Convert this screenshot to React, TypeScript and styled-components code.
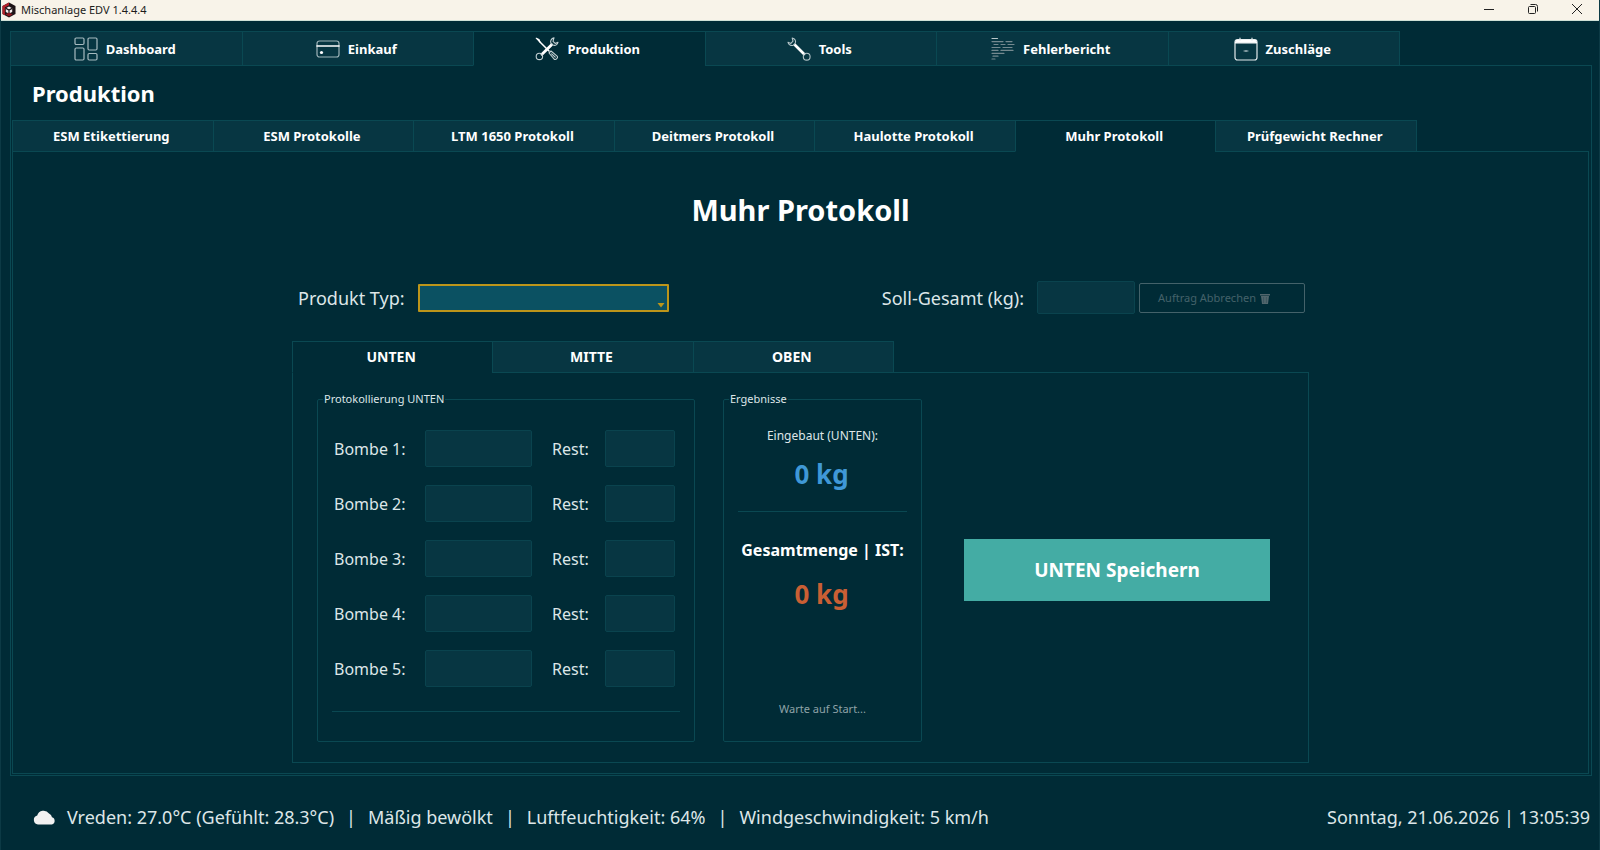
import React, { useState } from "react";
import styled, { createGlobalStyle, ThemeProvider } from "styled-components";

const theme = {
  bg: "#002b36",
  field: "#073642",
  line: "#0a4852",
  text: "#ffffff",
  soft: "#dde6e8",
  muted: "#8fa3a8",
  disabled: "#44626a",
  gold: "#bc951a",
  focusFill: "#0b5162",
  teal: "#44aca4",
  blue: "#3f98d7",
  orange: "#c95f34",
};

const GlobalStyle = createGlobalStyle`
  *, *::before, *::after { box-sizing: border-box; }
  body {
    margin: 0;
    background: ${theme.bg};
    color: ${theme.text};
    font-family: "Noto Sans", "Open Sans", sans-serif;
    font-size: 13px;
  }
  button, input, select { font-family: inherit; }
`;

const Window = styled.div`
  display: flex;
  flex-direction: column;
  min-height: 100vh;
  border: 1px solid #0c3a45;
  border-width: 0 1px;
`;

const TitleBar = styled.header`
  display: flex;
  align-items: center;
  height: 21px;
  padding-left: 1px;
  background: #f8f3e9;
  border-bottom: 1px solid #cfe0d6;
  color: #1c1c1c;
`;

const TitleText = styled.span`
  flex: 1;
  margin-left: 5px;
  font-size: 11px;
  line-height: 18px;
`;

const WindowButton = styled.button`
  display: flex;
  align-items: center;
  justify-content: center;
  width: 44px;
  height: 20px;
  padding: 0 0 2px;
  border: 0;
  background: none;
  color: #222;
`;

const Body = styled.main`
  display: flex;
  flex: 1;
  flex-direction: column;
  padding: 10px 7px 0 9px;
`;

const Notebook = styled.section`
  display: flex;
  flex: 1;
  flex-direction: column;
`;

const TabList = styled.div<{ $max: number }>`
  position: relative;
  z-index: 1;
  display: flex;
  max-width: ${(p) => p.$max}px;
  margin-bottom: -1px;
`;

const Tab = styled.button<{ $active: boolean; $tall?: boolean; $size?: number }>`
  display: flex;
  flex: 1 1 0;
  align-items: center;
  justify-content: center;
  gap: 8px;
  height: ${(p) => (p.$tall ? 35 : 32)}px;
  padding: 0 3px 0 0;
  border: 1px solid ${(p) => p.theme.line};
  border-bottom-color: ${(p) => (p.$active ? p.theme.bg : p.theme.line)};
  background: ${(p) => (p.$active ? p.theme.bg : p.theme.field)};
  color: ${(p) => p.theme.text};
  font-size: ${(p) => p.$size ?? 13}px;
  font-weight: 700;
  line-height: 18px;
  white-space: nowrap;

  &:not(:first-child) {
    margin-left: -1px;
  }
`;

const OuterPanel = styled.div`
  display: flex;
  flex: 1;
  flex-direction: column;
  padding: 0 2px 1px 1px;
  border: 1px solid ${(p) => p.theme.line};
`;

const PageTitle = styled.h1`
  margin: 0;
  padding: 12px 20px;
  font-size: 22px;
  font-weight: 700;
  line-height: 30px;
`;

const InnerPanel = styled.div`
  display: flex;
  flex: 1;
  flex-direction: column;
  align-items: center;
  padding: 0 20px 10px;
  border: 1px solid ${(p) => p.theme.line};
`;

const Heading = styled.h2`
  margin: 38px 0 51px;
  font-size: 29px;
  font-weight: 700;
  line-height: 40px;
`;

const Content = styled.div`
  display: flex;
  flex: 1;
  flex-direction: column;
  width: 100%;
  max-width: 1017px;
`;

const OrderRow = styled.form`
  display: flex;
  align-items: center;
  justify-content: space-between;
  margin-bottom: 27px;
  padding: 0 4px 0 6px;
`;

const OrderGroup = styled.div`
  display: flex;
  align-items: center;
`;

const OrderLabel = styled.label`
  margin-right: 13px;
  color: ${(p) => p.theme.soft};
  font-size: 18px;
  line-height: 26px;
`;

const SelectBox = styled.div`
  position: relative;
  width: 251px;
  height: 28px;
`;

const Select = styled.select`
  appearance: none;
  width: 100%;
  height: 100%;
  border: 2px solid ${(p) => p.theme.gold};
  border-radius: 1px;
  outline: 0;
  background: ${(p) => p.theme.focusFill};
  color: ${(p) => p.theme.text};
  font-size: 13px;
`;

const SelectArrow = styled.svg`
  position: absolute;
  right: 4px;
  bottom: 4px;
  pointer-events: none;
`;

const Field = styled.input<{ $w: number; $h: number }>`
  width: ${(p) => p.$w}px;
  height: ${(p) => p.$h}px;
  padding: 0 8px;
  border: 1px solid #0a434e;
  border-radius: 2px;
  outline: 0;
  background: ${(p) => p.theme.field};
  color: ${(p) => p.theme.text};
  font-size: 16px;
`;

const CancelButton = styled.button`
  display: flex;
  align-items: center;
  justify-content: center;
  gap: 4px;
  width: 166px;
  height: 30px;
  margin-left: 4px;
  padding: 0 16px 0 0;
  border: 1px solid ${(p) => p.theme.disabled};
  border-radius: 2px;
  background: none;
  color: ${(p) => p.theme.disabled};
  font-size: 11px;
  line-height: 16px;
`;

const LevelPanel = styled.div`
  display: flex;
  flex: 1;
  gap: 28px;
  padding: 17px 24px 20px;
  border: 1px solid ${(p) => p.theme.line};
`;

const Group = styled.fieldset<{ $w: number; $top: number }>`
  width: ${(p) => p.$w}px;
  min-width: 0;
  margin: 0;
  padding: ${(p) => p.$top}px 14px 0;
  border: 1px solid ${(p) => p.theme.line};
  border-radius: 2px;
`;

const GroupTitle = styled.legend`
  margin-left: -9px;
  padding: 0 1px;
  color: ${(p) => p.theme.soft};
  font-size: 11px;
  line-height: 18px;
`;

const BombRows = styled.div`
  display: flex;
  flex-direction: column;
  gap: 18px;
  padding-left: 2px;
`;

const BombRow = styled.div`
  display: grid;
  grid-template-columns: 91px 107px 1fr;
  align-items: center;
`;

const BombLabel = styled.label`
  color: ${(p) => p.theme.soft};
  font-size: 16px;
  line-height: 24px;
`;

const RestGroup = styled.div`
  display: flex;
  align-items: center;
  gap: 16px;
  margin-left: 20px;
`;

const Divider = styled.hr<{ $top: number }>`
  width: 100%;
  height: 1px;
  margin: ${(p) => p.$top}px 0 0;
  border: 0;
  background: ${(p) => p.theme.line};
`;

const Results = styled.div`
  display: flex;
  flex-direction: column;
  align-items: center;
  height: 100%;
  white-space: nowrap;
`;

const ResultLabel = styled.span`
  color: ${(p) => p.theme.soft};
  font-size: 12px;
  line-height: 16px;
`;

const TotalLabel = styled.strong`
  margin-top: 26px;
  font-size: 16px;
  line-height: 24px;
`;

const Amount = styled.output<{ $tone: "blue" | "orange" }>`
  margin-top: ${(p) => (p.$tone === "blue" ? 12 : 14)}px;
  padding-right: 2px;
  color: ${(p) => p.theme[p.$tone]};
  font-size: 26px;
  font-weight: 700;
  line-height: 36px;
`;

const Status = styled.span`
  margin-top: auto;
  margin-bottom: 23px;
  color: ${(p) => p.theme.muted};
  font-size: 11px;
  line-height: 18px;
`;

const SaveArea = styled.div`
  display: flex;
  flex: 1;
  align-items: center;
  justify-content: center;
  padding-top: 8px;
`;

const SaveButton = styled.button`
  width: 306px;
  height: 62px;
  border: 0;
  background: ${(p) => p.theme.teal};
  color: ${(p) => p.theme.text};
  font-size: 19px;
  font-weight: 700;
`;

const Footer = styled.footer`
  display: flex;
  align-items: center;
  justify-content: space-between;
  height: 74px;
  padding: 8px 9px 0 32px;
  color: ${(p) => p.theme.soft};
  font-size: 18px;
  line-height: 26px;
  white-space: nowrap;
`;

const Weather = styled.div`
  display: flex;
  align-items: center;
  gap: 12px;
`;

const CloudIcon = styled.svg`
  flex: none;
  margin-right: -1px;
`;

const stroke = { fill: "none", strokeLinecap: "round" as const, strokeLinejoin: "round" as const };

const Logo = () => (
  <svg width="14" height="16" viewBox="0 0 14 16" aria-hidden="true">
    <path d="M7 .5 13.5 4v8L7 15.5.5 12V4z" fill="#1d1417" />
    <path d="M7 .5 .5 4v8l2.4 1.3V5.4L7 3.2z" fill="#b3202a" />
    <path d="M7 4.6 10.2 6.3v3.6L7 11.6 3.8 9.9V6.3z" fill="#f4eeee" />
    <path d="M3.9 6.4 7 8l3.1-1.6M7 8v3.5" stroke="#1d1417" strokeWidth="1.2" fill="none" />
    <path d="M3.4 12.4 7 10.6l3.6 1.8L7 14.4z" fill="#8e1820" />
  </svg>
);

const DashboardIcon = () => (
  <svg width="24" height="24" viewBox="0 0 24 24" stroke="#a7bbc0" strokeWidth="1.2" {...stroke}>
    <rect x="1" y="1" width="9" height="6.5" rx="1.2" />
    <rect x="14" y="1" width="9" height="12" rx="1.2" />
    <rect x="1" y="11" width="9" height="12" rx="1.2" />
    <rect x="14" y="16.5" width="9" height="6.5" rx="1.2" />
  </svg>
);

const CardIcon = () => (
  <svg width="24" height="24" viewBox="0 0 24 24" stroke="#9db3b8" strokeWidth="1.2" {...stroke}>
    <rect x="1" y="4" width="22" height="16" rx="2.5" />
    <path d="M1 9h22" stroke="#fff" strokeWidth="1.6" />
    <circle cx="5.5" cy="15.5" r="1.6" fill="#fff" stroke="none" />
  </svg>
);

const CrossedToolsIcon = () => (
  <svg width="24" height="24" viewBox="0 0 24 24" stroke="#c3d0d3" strokeWidth="1.1" {...stroke}>
    <path d="M1.2 1.2 4 2.4 5 5z" fill="#fff" stroke="#fff" />
    <path d="M4.5 4.5 14 14" stroke="#fff" strokeWidth="1.5" />
    <path d="m14 16 2-2 6.4 5.4c.6 1.6-1.2 3.6-3 3z" />
    <path d="m16.6 16.8 3.6 3.4" />
    <path d="m7 17.2 9.6-9.4" stroke="#fff" strokeWidth="2.8" />
    <path d="M19 .9c-2.9.6-4 3-3 5.4l2 1.8c2.4.8 4.6-.4 5-2.9l-2.8 1.2-2.2-2.1z" />
    <circle cx="4.4" cy="19.4" r="3.2" />
  </svg>
);

const WrenchIcon = () => (
  <svg width="24" height="24" viewBox="0 0 24 24" stroke="#b4c4c8" strokeWidth="1.1" {...stroke}>
    <path d="m8 8 9 9" stroke="#fff" strokeWidth="2.8" />
    <path d="M5.2 1c2.9.6 4 3 3 5.4L6.4 8.2C4 9 1.6 7.8 1 5.3l2.9 1.1L6 4.2z" />
    <circle cx="19.7" cy="19.7" r="3.4" />
  </svg>
);

const ReportIcon = () => (
  <svg width="24" height="24" viewBox="0 0 24 24" stroke="#74898f" strokeWidth="1.2" {...stroke}>
    <path d="M1 1.5h5.5" stroke="#b9c7ca" />
    <path d="M1 4.6h11M15 4.6h6M3 7.5h4M10 7.5h4M17 7.5h6M1 10.5h8M12 10.5h9M1 13.4h6M10 13.4h12M1 16.3h12M2 19.2h5M1 22h3" />
  </svg>
);

const CalendarIcon = () => (
  <svg width="24" height="24" viewBox="0 0 24 24" stroke="#e3eaec" strokeWidth="1.2" {...stroke}>
    <rect x="1" y="2.5" width="22" height="20.5" rx="2.5" />
    <path d="M2.5 3.4h19l1 2.4h-21z" fill="#fff" stroke="#fff" />
    <path d="M6 1.2v2M18 1.2v2" />
    <path d="M10 14h4M12 13.4v1.2" strokeWidth="1" stroke="#a9bbc0" />
  </svg>
);

const TrashIcon = () => (
  <svg width="10" height="12" viewBox="0 0 10 12" fill="#52666c" aria-hidden="true">
    <path d="M0 2h10v1.5H0zM1 4h8l-1 8H2z" />
    <path d="M3.6 5v6M6.4 5v6" stroke="#34505a" strokeWidth=".7" />
  </svg>
);

const mainTabs = [
  { name: "Dashboard", Icon: DashboardIcon },
  { name: "Einkauf", Icon: CardIcon },
  { name: "Produktion", Icon: CrossedToolsIcon },
  { name: "Tools", Icon: WrenchIcon },
  { name: "Fehlerbericht", Icon: ReportIcon },
  { name: "Zuschläge", Icon: CalendarIcon },
];

const protocolTabs = [
  "ESM Etikettierung",
  "ESM Protokolle",
  "LTM 1650 Protokoll",
  "Deitmers Protokoll",
  "Haulotte Protokoll",
  "Muhr Protokoll",
  "Prüfgewicht Rechner",
];

const levels = ["UNTEN", "MITTE", "OBEN"];
const bombs = [1, 2, 3, 4, 5];
const weather = ["Vreden: 27.0°C (Gefühlt: 28.3°C)", "Mäßig bewölkt", "Luftfeuchtigkeit: 64%", "Windgeschwindigkeit: 5 km/h"];

export default function App() {
  const [mainTab, setMainTab] = useState("Produktion");
  const [protocol, setProtocol] = useState("Muhr Protokoll");
  const [level, setLevel] = useState("UNTEN");

  return (
    <ThemeProvider theme={theme}>
      <GlobalStyle />
      <Window>
        <TitleBar>
          <Logo />
          <TitleText>Mischanlage EDV 1.4.4.4</TitleText>
          <WindowButton aria-label="Minimieren">
            <svg width="10" height="10" viewBox="0 0 10 10" stroke="currentColor">
              <path d="M0 5.5h10" />
            </svg>
          </WindowButton>
          <WindowButton aria-label="Wiederherstellen">
            <svg width="10" height="10" viewBox="0 0 10 10" stroke="currentColor" fill="none">
              <rect x=".5" y="2.5" width="7" height="7" rx="1" />
              <path d="M2.5 .5h5a2 2 0 0 1 2 2v5" />
            </svg>
          </WindowButton>
          <WindowButton aria-label="Schließen">
            <svg width="10" height="10" viewBox="0 0 10 10" stroke="currentColor">
              <path d="m0 0 10 10M10 0 0 10" />
            </svg>
          </WindowButton>
        </TitleBar>

        <Body>
          <Notebook>
            <TabList role="tablist" $max={1390}>
              {mainTabs.map(({ name, Icon }) => (
                <Tab key={name} role="tab" aria-selected={name === mainTab} $active={name === mainTab} $tall onClick={() => setMainTab(name)}>
                  <Icon />
                  {name}
                </Tab>
              ))}
            </TabList>
            <OuterPanel>
              <PageTitle>{mainTab}</PageTitle>
              <Notebook>
                <TabList role="tablist" $max={1405}>
                  {protocolTabs.map((name) => (
                    <Tab key={name} role="tab" aria-selected={name === protocol} $active={name === protocol} onClick={() => setProtocol(name)}>
                      {name}
                    </Tab>
                  ))}
                </TabList>
                <InnerPanel>
                  <Heading>{protocol}</Heading>
                  <Content>
                    <OrderRow onSubmit={(e) => e.preventDefault()}>
                      <OrderGroup>
                        <OrderLabel htmlFor="product">Produkt Typ:</OrderLabel>
                        <SelectBox>
                          <Select id="product" defaultValue="">
                            <option value="" />
                          </Select>
                          <SelectArrow width="8" height="5" viewBox="0 0 8 5" fill={theme.gold} aria-hidden="true">
                            <path d="M.5 0h7L4 4.5z" />
                          </SelectArrow>
                        </SelectBox>
                      </OrderGroup>
                      <OrderGroup>
                        <OrderLabel htmlFor="target">Soll-Gesamt (kg):</OrderLabel>
                        <Field id="target" $w={98} $h={33} />
                        <CancelButton type="button" disabled>
                          Auftrag Abbrechen
                          <TrashIcon />
                        </CancelButton>
                      </OrderGroup>
                    </OrderRow>

                    <Notebook>
                      <TabList role="tablist" $max={602}>
                        {levels.map((name) => (
                          <Tab key={name} role="tab" aria-selected={name === level} $active={name === level} $size={14} onClick={() => setLevel(name)}>
                            {name}
                          </Tab>
                        ))}
                      </TabList>
                      <LevelPanel>
                        <Group $w={378} $top={22}>
                          <GroupTitle>Protokollierung {level}</GroupTitle>
                          <BombRows>
                            {bombs.map((n) => (
                              <BombRow key={n}>
                                <BombLabel htmlFor={`bomb-${n}`}>Bombe {n}:</BombLabel>
                                <Field id={`bomb-${n}`} $w={107} $h={37} />
                                <RestGroup>
                                  <BombLabel htmlFor={`rest-${n}`}>Rest:</BombLabel>
                                  <Field id={`rest-${n}`} $w={70} $h={37} />
                                </RestGroup>
                              </BombRow>
                            ))}
                          </BombRows>
                          <Divider $top={24} />
                        </Group>

                        <Group $w={199} $top={20}>
                          <GroupTitle>Ergebnisse</GroupTitle>
                          <Results>
                            <ResultLabel>Eingebaut ({level}):</ResultLabel>
                            <Amount $tone="blue">0 kg</Amount>
                            <Divider $top={19} />
                            <TotalLabel>Gesamtmenge | IST:</TotalLabel>
                            <Amount $tone="orange">0 kg</Amount>
                            <Status>Warte auf Start...</Status>
                          </Results>
                        </Group>

                        <SaveArea>
                          <SaveButton type="button">{level} Speichern</SaveButton>
                        </SaveArea>
                      </LevelPanel>
                    </Notebook>
                  </Content>
                </InnerPanel>
              </Notebook>
            </OuterPanel>
          </Notebook>
        </Body>

        <Footer>
          <Weather>
            <CloudIcon width="23" height="15" viewBox="0 0 23 15" fill="#f1f1f1" aria-hidden="true">
              <path d="M5 14.5a4.6 4.6 0 0 1-.8-9A6.6 6.6 0 0 1 16 3.6a4.8 4.8 0 0 1 3 3.6 3.8 3.8 0 0 1-.2 7.3z" />
            </CloudIcon>
            {weather.map((part, i) => (
              <React.Fragment key={part}>
                {i > 0 && <span>|</span>}
                <span>{part}</span>
              </React.Fragment>
            ))}
          </Weather>
          <time>Sonntag, 21.06.2026 | 13:05:39</time>
        </Footer>
      </Window>
    </ThemeProvider>
  );
}
